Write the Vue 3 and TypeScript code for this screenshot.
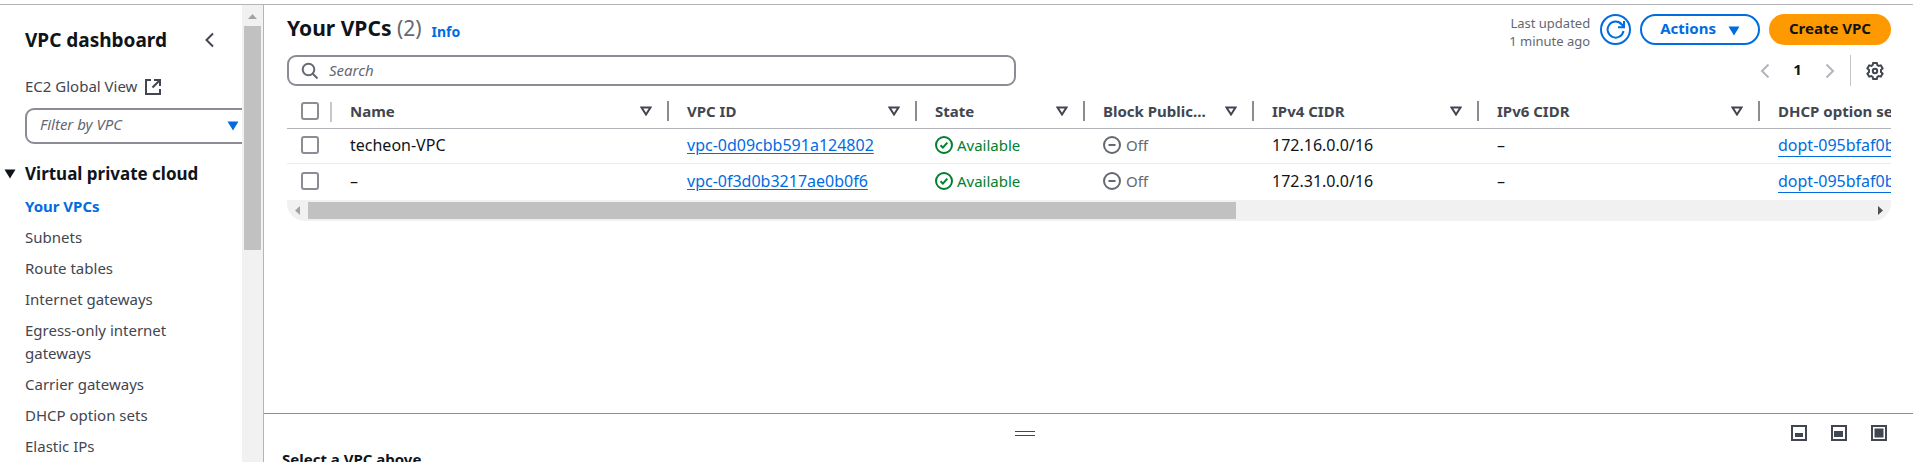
<script setup lang="ts">
import { ref } from 'vue'

interface Vpc {
  name: string
  id: string
  ipv4: string
  ipv6: string
  dhcp: string
}

interface Column {
  label: string
  key: string
}

const navItems: string[] = [
  'Your VPCs',
  'Subnets',
  'Route tables',
  'Internet gateways',
  'Egress-only internet gateways',
  'Carrier gateways',
  'DHCP option sets',
  'Elastic IPs',
]

const columns: Column[] = [
  { label: 'Name', key: 'name' },
  { label: 'VPC ID', key: 'vpc-id' },
  { label: 'State', key: 'state' },
  { label: 'Block Public…', key: 'block' },
  { label: 'IPv4 CIDR', key: 'ipv4' },
  { label: 'IPv6 CIDR', key: 'ipv6' },
  { label: 'DHCP option set', key: 'dhcp' },
]

const vpcs: Vpc[] = [
  { name: 'techeon-VPC', id: 'vpc-0d09cbb591a124802', ipv4: '172.16.0.0/16', ipv6: '–', dhcp: 'dopt-095bfaf0b' },
  { name: '–', id: 'vpc-0f3d0b3217ae0b0f6', ipv4: '172.31.0.0/16', ipv6: '–', dhcp: 'dopt-095bfaf0b' },
]

const selected = ref<string[]>([])
const search = ref('')
const filterVpc = ref('')

function toggleAll(event: Event) {
  selected.value = (event.target as HTMLInputElement).checked ? vpcs.map((v) => v.id) : []
}
</script>

<template>
  <div class="page">
    <aside class="sidebar">
      <div class="sidebar-content">
        <div class="sidebar-head">
          <h2>VPC dashboard</h2>
          <button class="plain" type="button" aria-label="Close navigation">
            <svg width="16" height="16" viewBox="0 0 16 16"><path d="M11 1.500 4.500 8l6.500 6.500" class="stroke" /></svg>
          </button>
        </div>
        <a class="global" href="#">
          EC2 Global View
          <svg width="16" height="16" viewBox="0 0 16 16">
            <path d="M6 1H1v14h14v-5M9 1h6v6M15 1 7.500 8.500" class="stroke" />
          </svg>
        </a>
        <div class="vpc-filter">
          <select v-model="filterVpc" aria-label="Filter by VPC">
            <option value="">Filter by VPC</option>
            <option v-for="v in vpcs" :key="v.id" :value="v.id">{{ v.id }}</option>
          </select>
          <svg class="caret" width="12" height="10" viewBox="0 0 12 10"><path d="M.5.500h11L6 9.500z" /></svg>
        </div>
        <nav>
          <button class="section" type="button" aria-expanded="true">
            <svg width="12" height="10" viewBox="0 0 12 10"><path d="M.5.500h11L6 9.500z" /></svg>
            Virtual private cloud
          </button>
          <ul>
            <li v-for="(item, i) in navItems" :key="item">
              <a href="#" :class="{ active: i === 0 }">{{ item }}</a>
            </li>
          </ul>
        </nav>
      </div>
      <div class="vbar" aria-hidden="true">
        <svg width="9" height="5" viewBox="0 0 9 5"><path d="M0 5 4.500 0 9 5z" fill="#a3a3a3" /></svg>
        <div class="vthumb"></div>
      </div>
    </aside>

    <div class="content">
      <main>
        <header class="heading">
          <h1>Your VPCs <span>(2)</span></h1>
          <a class="info" href="#">Info</a>
          <p class="updated">Last updated<br />1 minute ago</p>
          <button class="btn round" type="button" aria-label="Refresh">
            <svg width="20" height="20" viewBox="0 0 20 20">
              <path d="M17.500 11A8 8 0 1 1 15.800 4.500L18 7" class="stroke" />
              <path d="M18 1v6.200h-6" class="stroke" />
            </svg>
          </button>
          <button class="btn actions" type="button">
            Actions
            <svg width="12" height="10" viewBox="0 0 12 10"><path d="M.5.500h11L6 9.500z" /></svg>
          </button>
          <button class="btn primary" type="button">Create VPC</button>
        </header>

        <div class="tools">
          <label class="search">
            <svg width="18" height="18" viewBox="0 0 18 18">
              <circle cx="7.500" cy="7.500" r="5.800" class="stroke" />
              <path d="m11.800 11.800 4.700 4.700" class="stroke" />
            </svg>
            <input v-model="search" type="text" placeholder="Search" aria-label="Search" />
          </label>
          <div class="pager">
            <button class="plain faint" type="button" aria-label="Previous page">
              <svg width="10" height="16" viewBox="0 0 10 16"><path d="M8.500 1.500 2 8l6.500 6.500" class="stroke" /></svg>
            </button>
            <button class="plain page-no" type="button">1</button>
            <button class="plain faint" type="button" aria-label="Next page">
              <svg width="10" height="16" viewBox="0 0 10 16"><path d="M1.500 1.500 8 8l-6.500 6.500" class="stroke" /></svg>
            </button>
            <span class="rule"></span>
            <button class="plain" type="button" aria-label="Preferences">
              <svg width="18" height="18" viewBox="0 0 18 18">
                <path
                  d="M7.200 1h3.600l.6 2.200 1.200.7 2.200-.6L16.600 6.400 15 8v2l1.600 1.600-1.800 3.100-2.200-.6-1.200.7-.6 2.200H7.200l-.6-2.200-1.200-.7-2.200.6-1.800-3.100L3 10V8L1.400 6.400l1.800-3.100 2.200.6 1.200-.7z"
                  class="stroke"
                />
                <circle cx="9" cy="9" r="2.200" class="stroke" />
              </svg>
            </button>
          </div>
        </div>

        <div class="scroller">
          <table>
            <colgroup>
              <col class="c-check" />
              <col v-for="c in columns" :key="c.key" :class="`c-${c.key}`" />
            </colgroup>
            <thead>
              <tr>
                <th scope="col" class="check">
                  <input
                    type="checkbox"
                    aria-label="Select all VPCs"
                    :checked="selected.length === vpcs.length"
                    @change="toggleAll"
                  />
                </th>
                <th v-for="c in columns" :key="c.key" scope="col">
                  <div class="th">
                    <span>{{ c.label }}</span>
                    <button class="plain" type="button" :aria-label="`Sort by ${c.label}`">
                      <svg width="12" height="10" viewBox="0 0 12 10"><path d="M1.500 1.500h9L6 8.500z" class="stroke" /></svg>
                    </button>
                  </div>
                </th>
              </tr>
            </thead>
            <tbody>
              <tr v-for="v in vpcs" :key="v.id">
                <td class="check"><input v-model="selected" type="checkbox" :value="v.id" :aria-label="`Select ${v.id}`" /></td>
                <td>{{ v.name }}</td>
                <td><a href="#">{{ v.id }}</a></td>
                <td>
                  <span class="status ok">
                    <svg width="18" height="18" viewBox="0 0 18 18">
                      <circle cx="9" cy="9" r="8" class="stroke" />
                      <path d="m5.500 9.300 2.400 2.300 4.400-5" class="stroke" />
                    </svg>
                    Available
                  </span>
                </td>
                <td>
                  <span class="status off">
                    <svg width="18" height="18" viewBox="0 0 18 18">
                      <circle cx="9" cy="9" r="8" class="stroke" />
                      <path d="M5.500 9h7" class="stroke" />
                    </svg>
                    Off
                  </span>
                </td>
                <td>{{ v.ipv4 }}</td>
                <td>{{ v.ipv6 }}</td>
                <td><a class="dopt" href="#">{{ v.dhcp }}</a></td>
              </tr>
            </tbody>
          </table>
          <div class="hbar" aria-hidden="true">
            <svg width="5" height="9" viewBox="0 0 5 9"><path d="M5 0 0 4.500 5 9z" fill="#a3a3a3" /></svg>
            <div class="htrack"><div class="hthumb"></div></div>
            <svg width="5" height="9" viewBox="0 0 5 9"><path d="M0 0l5 4.500L0 9z" fill="#505050" /></svg>
          </div>
        </div>
      </main>

      <section class="split">
        <div class="split-tools">
          <div class="grip">
            <button class="plain handle" type="button" aria-label="Resize panel"></button>
          </div>
          <div class="sizes">
            <button class="plain" type="button" aria-label="Small panel">
              <svg width="16" height="16" viewBox="0 0 16 16"><path d="M1 1h14v14H1z" class="stroke" /><path d="M4 8h8v4H4z" /></svg>
            </button>
            <button class="plain" type="button" aria-label="Medium panel">
              <svg width="16" height="16" viewBox="0 0 16 16"><path d="M1 1h14v14H1z" class="stroke" /><path d="M3 6h9v6H3z" /></svg>
            </button>
            <button class="plain" type="button" aria-label="Full panel">
              <svg width="16" height="16" viewBox="0 0 16 16"><path d="M1 1h14v14H1z" class="stroke" /><path d="M3.500 3.500h9v9h-9z" /></svg>
            </button>
          </div>
        </div>
        <h3>Select a VPC above</h3>
      </section>
    </div>
  </div>
</template>

<style>
body {
  margin: 0;
  background: #fff;
}
</style>

<style scoped>
.page {
  box-sizing: border-box;
  height: 100vh;
  padding-top: 4px;
  display: flex;
  overflow: hidden;
  color: #0f141a;
  font-family: 'Noto Sans', 'Open Sans', sans-serif;
  font-size: 15px;
  line-height: 23px;
}
.page *,
.page *::before {
  box-sizing: border-box;
}
h1,
h2,
h3,
p,
ul {
  margin: 0;
  padding: 0;
}
a {
  color: #006ce0;
}
svg {
  display: block;
  flex: none;
  fill: currentColor;
}
.stroke {
  fill: none;
  stroke: currentColor;
  stroke-width: 2;
}
button {
  font: inherit;
  color: inherit;
  cursor: pointer;
}
.plain {
  padding: 0;
  border: 0;
  background: none;
}

.sidebar {
  display: flex;
  flex: none;
  width: 264px;
  border-top: 1px solid #b4b4bb;
  border-right: 1px solid #b4b4bb;
}
.sidebar-content {
  flex: 1;
  min-width: 0;
  overflow: hidden;
  padding: 22px 0 0 25px;
  color: #424650;
}
.sidebar-head {
  display: flex;
  align-items: center;
  justify-content: space-between;
  padding-right: 24px;
}
h2 {
  color: #0f141a;
  font-size: 19px;
  line-height: 26px;
}
.global {
  display: flex;
  align-items: center;
  gap: 8px;
  margin-top: 22px;
  color: #424650;
  text-decoration: none;
}
.vpc-filter {
  display: grid;
  align-items: center;
  width: 226px;
  height: 36px;
  margin-top: 10px;
}
.vpc-filter > * {
  grid-area: 1 / 1;
}
.vpc-filter select {
  width: 100%;
  height: 100%;
  padding: 0 30px 4px 13px;
  appearance: none;
  border: 2px solid #8c8c94;
  border-radius: 9px;
  background: #fff;
  color: #656871;
  font: italic 15px 'Noto Sans', 'Open Sans', sans-serif;
}
.caret {
  justify-self: end;
  margin-right: 12px;
  color: #006ce0;
  pointer-events: none;
}
.section {
  display: flex;
  align-items: center;
  gap: 9px;
  margin: 18px 0 0 -21px;
  padding: 0;
  border: 0;
  background: none;
  color: #0f141a;
  font-weight: 700;
  font-size: 17px;
  white-space: nowrap;
}
ul {
  display: grid;
  gap: 8px;
  margin-top: 10px;
  padding-right: 40px;
  list-style: none;
}
li a {
  display: block;
  color: #424650;
  text-decoration: none;
}
li .active {
  color: #006ce0;
  font-weight: 700;
}
.vbar {
  flex: none;
  display: flex;
  flex-direction: column;
  align-items: center;
  gap: 7px;
  width: 21px;
  padding-top: 9px;
  background: #f1f1f1;
}
.vthumb {
  width: 17px;
  height: 50%;
  background: #c1c1c1;
}

.content {
  flex: 1;
  min-width: 0;
  display: flex;
  flex-direction: column;
  border-top: 1px solid #b4b4bb;
}
main {
  flex: 1;
  min-height: 0;
  padding: 9px 22px 0 23px;
}
.heading {
  display: flex;
  align-items: flex-start;
}
h1 {
  font-size: 21px;
  line-height: 29px;
}
h1 span {
  color: #656871;
  font-weight: 400;
}
.info {
  margin: 6px auto 0 10px;
  font-size: 14px;
  line-height: 23px;
  font-weight: 700;
  text-decoration: none;
}
.updated {
  margin-right: 10px;
  color: #656871;
  font-size: 13px;
  line-height: 18px;
  text-align: right;
}
.btn {
  display: flex;
  align-items: center;
  justify-content: center;
  height: 31px;
  margin-right: 9px;
  border: 2px solid #006ce0;
  border-radius: 16px;
  background: #fff;
  color: #006ce0;
  font-weight: 700;
  padding: 0 18px 2px;
}
.round {
  width: 31px;
  padding: 0;
}
.actions {
  gap: 12px;
}
.actions svg {
  margin-top: 4px;
}
.primary {
  margin-right: 0;
  border-color: #ff9900;
  background: #ff9900;
  color: #0f141a;
}

.tools {
  display: flex;
  justify-content: space-between;
  margin-top: 5px;
}
.search {
  display: flex;
  align-items: center;
  gap: 10px;
  width: 46%;
  max-width: 729px;
  height: 31px;
  padding: 0 12px;
  border: 2px solid #8c8c94;
  border-radius: 9px;
  color: #656871;
}
.search input {
  flex: 1;
  min-width: 0;
  padding: 0;
  border: 0;
  outline: 0;
  background: none;
  color: #0f141a;
  font: inherit;
}
.search input::placeholder {
  color: #656871;
  font-style: italic;
  opacity: 1;
}
.pager {
  display: flex;
  align-items: center;
  padding-right: 7px;
  color: #424650;
}
.faint {
  color: #b4b4bb;
}
.page-no {
  width: 55px;
  padding-bottom: 2px;
  color: #0f141a;
  font-weight: 700;
}
.rule {
  width: 1px;
  height: 31px;
  margin: 0 15px;
  background: #c6c6cd;
}

.scroller {
  margin-top: 8px;
  overflow: hidden;
  border-radius: 0 0 18px 18px;
}
table {
  width: 1673px;
  table-layout: fixed;
  border-collapse: separate;
  border-spacing: 0;
}
.c-check {
  width: 45px;
}
.c-name {
  width: 337px;
}
.c-vpc-id {
  width: 248px;
}
.c-state {
  width: 168px;
}
.c-block {
  width: 169px;
}
.c-ipv4 {
  width: 225px;
}
.c-ipv6 {
  width: 281px;
}
.c-dhcp {
  width: 200px;
}
th,
td {
  height: 35px;
  padding: 0 0 0 18px;
  text-align: left;
  white-space: nowrap;
}
th {
  border-bottom: 1px solid #b4b4bb;
  color: #424650;
}
td {
  padding-bottom: 2px;
  font-size: 16px;
}
tbody tr:first-child td {
  border-bottom: 1px solid #ebebf0;
}
tbody tr:last-child td {
  height: 36px;
}
th.check,
td.check {
  padding-left: 14px;
}
th.check {
  background: linear-gradient(#c6c6cd, #c6c6cd) right 8px / 2px 20px no-repeat;
}
.th {
  display: flex;
  align-items: center;
  justify-content: space-between;
  height: 20px;
  padding-right: 15px;
  border-right: 2px solid #8c8c94;
}
.check input {
  display: block;
  width: 18px;
  height: 18px;
  margin: 0;
  appearance: none;
  border: 2px solid #8c8c94;
  border-radius: 3px;
  background: #fff;
}
.check input:checked {
  border-color: #006ce0;
  background: #006ce0;
}
td a {
  text-underline-offset: 2px;
}
td .dopt {
  text-underline-offset: 5px;
}
.status {
  display: flex;
  align-items: center;
  gap: 4px;
  font-size: 15px;
}
.ok {
  color: #00802f;
}
.off {
  gap: 5px;
  color: #656871;
}
.hbar {
  display: flex;
  align-items: center;
  gap: 8px;
  height: 21px;
  padding: 0 8px;
  background: #f1f1f1;
}
.htrack {
  flex: 1;
}
.hthumb {
  width: 59.4%;
  height: 17px;
  background: #c1c1c1;
}

.split {
  flex: none;
  height: 49px;
  padding: 0 26px 0 18px;
  border-top: 1px solid #8c8c94;
}
.split-tools {
  display: flex;
  align-items: center;
  gap: 24px;
  padding-top: 11px;
}
.grip {
  display: flex;
  flex: 1;
  justify-content: center;
}
.handle {
  width: 20px;
  height: 5px;
  border: solid #424650;
  border-width: 1px 0;
}
.sizes {
  display: flex;
  gap: 24px;
  color: #424650;
}
h3 {
  margin-top: 7px;
  font-size: 15px;
}
</style>
